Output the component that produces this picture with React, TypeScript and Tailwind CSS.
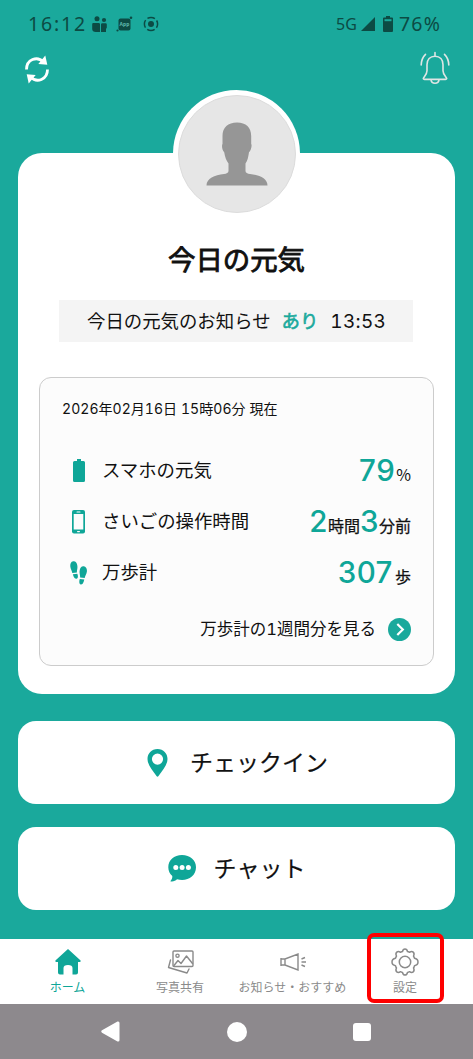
import type { ReactNode } from "react";

const Digits = ({ children }: { children: ReactNode }) => (
  <span className="text-[29.500px] font-medium tracking-[0.5px] text-[#0fa698] [-webkit-text-stroke:0px]">
    {children}
  </span>
);

function StatusBar() {
  return (
    <div className="flex h-12 items-center justify-between pl-[28px] pr-[33px] font-['Noto_Sans'] text-[#0c4b44]">
      <div className="flex items-center">
        <span className="w-[64px] text-[19.500px] leading-none tracking-[1.800px]">
          16:12
        </span>
        <svg className="h-[17px] w-[15px]" viewBox="0 0 15 17" fill="currentColor">
          <circle cx="5" cy="2.8" r="2.5" />
          <circle cx="12" cy="4" r="2.1" />
          <path d="M1.3 7h5.4q1.3 0 1.3 1.3V16H4q-3.8 0-3.8-3V8.200Q.2 7 1.300 7z" />
          <path d="M10.300 7.200h3.300q1.200 0 1.200 1.200v3q0 1-.8 1.400V16H9V8.400q0-1.200 1.300-1.200z" />
        </svg>
        <svg className="ml-[9px] h-[17px] w-[17px]" viewBox="0 0 17 17">
          <rect x="2.500" y="2.500" width="12" height="12" rx="2" fill="currentColor" />
          <circle cx="15" cy="1.800" r="1.300" fill="currentColor" />
          <circle cx="1.500" cy="14.500" r="1.100" fill="currentColor" />
          <text x="8.500" y="10.300" fontSize="5" fontWeight="bold" textAnchor="middle" fill="#5fb9ae">
            App
          </text>
        </svg>
        <svg className="ml-[10px] h-[16px] w-[16px]" viewBox="0 0 16 16" fill="none" stroke="currentColor">
          <circle cx="8" cy="8" r="3" fill="currentColor" stroke="none" />
          <circle cx="8" cy="8" r="6.600" strokeWidth="1.500" strokeDasharray="7.870 2.500" strokeDashoffset="3.935" />
        </svg>
      </div>
      <div className="flex items-center">
        <span className="w-[25px] text-[16px] leading-none">5G</span>
        <svg className="h-[14px] w-[14px]" viewBox="0 0 14 14" fill="currentColor">
          <path d="M14 0v14H0z" />
        </svg>
        <svg className="ml-[8px] h-[16px] w-[10px]" viewBox="0 0 10 16" fill="currentColor">
          <path d="M3 0h4v1.500h2q1 0 1 1V15q0 1-1 1H1q-1 0-1-1V2.500q0-1 1-1h2z" />
          <path d="M1.500 3.200h7v2h-7z" fill="#1aa99c" />
        </svg>
        <span className="ml-[6px] w-[41px] whitespace-nowrap text-[19.500px] leading-none tracking-[1.200px]">
          76%
        </span>
      </div>
    </div>
  );
}

function Header() {
  return (
    <div className="flex h-[42px] items-start justify-between pl-[25px] pr-[23px]">
      <svg className="mt-[7px] h-[29px] w-[24px]" viewBox="0 0 24 29">
        <g fill="none" stroke="#fff" strokeWidth="2.800">
          <path d="M1.500 14.500C1.500 4.500 12 .5 18.500 7" />
          <path d="M22.500 14.500c0 10-10.500 14-17 7.500" />
        </g>
        <path d="M20.300.5 22.300 9.700 13.300 9z" fill="#fff" />
        <path d="M3.700 28.500 1.700 19.300 10.700 20z" fill="#fff" />
      </svg>
      <svg
        className="mt-[3px] h-[34px] w-[30px]"
        viewBox="0 0 30 34"
        fill="none"
        stroke="#dfe5e4"
        strokeWidth="1.600"
        strokeLinecap="round"
        strokeLinejoin="round"
      >
        <path d="M15 1.500v3.700M15 5.200c-5 0-8 3.500-8 8.500v6c0 3-1.500 4.500-3.200 6.700-.9 1.200-.6 2 .7 2h21c1.300 0 1.600-.8.700-2C24.500 24.200 23 22.700 23 19.700v-6c0-5-3-8.500-8-8.500z" />
        <path d="M11 28.700c.5 4.800 7.500 4.800 8 0M5.500 3.300C2.700 6 1.300 9.500 1.200 14M24.500 3.300c2.800 2.700 4.200 6.200 4.300 10.700" />
      </svg>
    </div>
  );
}

function Avatar() {
  return (
    <div className="mx-auto flex h-[127px] w-[127px] items-center justify-center rounded-full bg-white">
      <div className="flex h-[118px] w-[118px] items-center justify-center rounded-full border border-[#dcdcdc] bg-[#e6e6e6]">
        <svg className="h-[64px] w-[62px]" viewBox="0 0 62 64" fill="#969696">
          <path d="M31 .5c-9 0-14.500 5-14.500 13.500v8c-1 .7-.4 6.500 1.700 8.200.7 4.500 2.300 8.800 4.300 11.300V49c0 2-2 2.600-4.500 3-9.500 1-17.500 4.500-17.500 11.500h61C61.500 56.500 53.500 53 44 52c-2.500-.4-4.500-1-4.500-3v-7.500c2-2.500 2.800-6.800 3.500-11.300 2.100-1.700 3.200-7.500 2.200-8.200v-8C45.200 5.500 40 .5 31 .5z" />
        </svg>
      </div>
    </div>
  );
}

const BatteryIcon = () => (
  <svg className="h-[23px] w-[12px]" viewBox="0 0 12 23" fill="#0fa698">
    <path d="M4 0h4v2h2.500Q12 2 12 3.500v18q0 1.500-1.500 1.500h-9Q0 23 0 21.500v-18Q0 2 1.500 2H4z" />
  </svg>
);

const PhoneIcon = () => (
  <svg className="h-[24px] w-[13px]" viewBox="0 0 13 24">
    <rect width="13" height="23.500" rx="2" fill="#0fa698" />
    <rect x="1.700" y="4" width="9.600" height="15.500" fill="#fcfcfc" />
    <rect x="4.500" y="1.500" width="4" height="1" rx=".5" fill="#fcfcfc" />
    <rect x="5" y="21" width="3" height="1.200" rx=".6" fill="#fcfcfc" />
  </svg>
);

const StepsIcon = () => (
  <svg className="h-[24px] w-[17px]" viewBox="0 0 17 24" fill="#0fa698">
    <path d="M3.200.3C1 .6 0 3 .3 5.500c.3 2.700 1.500 4 2 6.500l4.600-.6c-.2-2.400.8-3.400.5-6.400C7.100 2 5.500 0 3.200.3z" />
    <path d="m2.900 13.300 4.400-.6c.8 1.700 1 4.600-.8 5-2.200.4-3-2-3.600-4.400z" />
    <path d="M13.800 5.300c2.200.3 3.400 2.700 3.100 5.200-.3 2.700-1.700 4-2.200 6.500l-4.600-.6c.2-2.400-.8-3.400-.5-6.400.3-3 1.900-5 4.200-4.700z" />
    <path d="m9.800 18 4.500.6c-.6 2.400-1.400 5.200-3.500 4.900-1.900-.3-1.700-3.600-1-5.500z" />
  </svg>
);

const stats = [
  {
    icon: <BatteryIcon />,
    label: "スマホの元気",
    value: (
      <>
        <Digits>79</Digits>
        <span className="ml-px font-['Noto_Sans_CJK_JP'] [-webkit-text-stroke:0px]">
          %
        </span>
      </>
    ),
  },
  {
    icon: <PhoneIcon />,
    label: "さいごの操作時間",
    value: (
      <>
        <Digits>2</Digits>時間<Digits>3</Digits>分前
      </>
    ),
  },
  {
    icon: <StepsIcon />,
    label: "万歩計",
    value: (
      <>
        <Digits>307</Digits>
        <span className="ml-[2px]">歩</span>
      </>
    ),
  },
];

function StatsPanel() {
  return (
    <div className="ml-[21px] mt-[35px] h-[289px] w-[395px] rounded-xl border-[1.500px] border-[#cccccc] bg-[#fcfcfc] pl-[22px] pr-[22px] pt-[20px]">
      <p className="h-[22px] whitespace-nowrap text-[14px] leading-[22px] tracking-[0.050px] tabular-nums">
        2026年02月16日 15時06分 現在
      </p>
      <div className="mt-[25px]">
        {stats.map((stat) => (
          <div key={stat.label} className="flex h-[51px] items-center">
            <div className="flex w-[33px] justify-center">{stat.icon}</div>
            <span className="ml-[7px] whitespace-nowrap text-[18.400px] leading-none">
              {stat.label}
            </span>
            <span className="ml-auto whitespace-nowrap text-[16px] leading-none [-webkit-text-stroke:0.25px]">
              {stat.value}
            </span>
          </div>
        ))}
      </div>
      <div className="mt-[7px] flex h-[48px] items-center justify-end">
        <span className="text-[16.500px] leading-none tabular-nums">
          万歩計の1週間分を見る
        </span>
        <svg className="ml-[12px] h-[23px] w-[23px]" viewBox="0 0 23 23">
          <circle cx="11.500" cy="11.500" r="11.500" fill="#1aa99c" />
          <path d="m9.300 6 5.500 5.500L9.300 17" fill="none" stroke="#fff" strokeWidth="2.200" />
        </svg>
      </div>
    </div>
  );
}

function ActionButton({ icon, label }: { icon: ReactNode; label: string }) {
  return (
    <button className="flex h-[83px] w-full items-center justify-center rounded-[18px] bg-white text-[23px] [-webkit-text-stroke:0.2px]">
      {icon}
      <span className="pt-[2px] leading-none">{label}</span>
    </button>
  );
}

function TabBar() {
  return (
    <nav className="flex h-[65px] w-full bg-white pl-[11px] pr-[12px] text-[12px] text-[#8a8a8a]">
      <div className="flex w-[113px] flex-col items-center text-[#0fa698]">
        <svg className="mt-[10px] h-[26px] w-[26px]" viewBox="0 0 26 26" fill="currentColor">
          <path d="M13 0 25.600 11.500q.4 1.500-1 1.500H23v10.500q0 2-2 2h-3.500V19q0-3-4.500-3t-4.500 3v6.500H5q-2 0-2-2V13H1.400q-1.400 0-1-1.500z" />
        </svg>
        <span className="mt-[6px] leading-[14px]">ホーム</span>
      </div>
      <div className="flex w-[112px] flex-col items-center">
        <svg
          className="mt-[11px] h-[25px] w-[27px]"
          viewBox="0 0 27 25"
          fill="none"
          stroke="currentColor"
          strokeWidth="1.400"
          strokeLinejoin="round"
          strokeLinecap="round"
        >
          <rect x="6" y="1" width="20" height="15.500" rx="1" />
          <circle cx="10.500" cy="5.700" r="1.600" />
          <path d="m7 15.500 4-5 3 3L19.500 6l6 7.500M3.500 10 1.500 17.500 20 23l2-4" />
        </svg>
        <span className="mt-[6px] leading-[14px]">写真共有</span>
      </div>
      <div className="flex w-[113px] flex-col items-center">
        <svg
          className="mt-[14px] h-[18px] w-[26px]"
          viewBox="0 0 26 18"
          fill="none"
          stroke="currentColor"
          strokeWidth="1.400"
        >
          <path d="M1 5v8M1 6h4l13-5v16L5 12H1M5 6v6M21.500 6 25 4.500M21.500 9H26M21.500 12l3.500 1.500" />
        </svg>
        <span className="mt-[10px] whitespace-nowrap leading-[14px]">
          お知らせ・おすすめ
        </span>
      </div>
      <div className="relative flex w-[112px] flex-col items-center">
        <svg
          className="mt-[9px] h-[28px] w-[28px]"
          viewBox="0 0 28 28"
          fill="none"
          stroke="currentColor"
          strokeWidth="1.500"
          strokeLinejoin="round"
        >
          <circle cx="14" cy="14" r="5.700" />
          <path d="M11.500 3.500Q12 1 14 1t2.500 2.500q1 .2 2 .8 2.200-1.500 3.700-.2 1.600 1.600.3 3.900.6.900 1 2.300 3.500.7 3.500 3.700t-3.500 3.700q-.4 1.400-1 2.300 1.300 2.300-.3 3.900-1.500 1.300-3.700-.2-1 .6-2 .8Q16 27 14 27t-2.500-2.500q-1-.2-2-.8-2.200 1.500-3.700.2-1.600-1.600-.3-3.900-.6-.9-1-2.300Q1 17 1 14t3.500-3.700q.4-1.400 1-2.300-1.300-2.300.3-3.900 1.500-1.300 3.700.2 1-.6 2-.8z" />
        </svg>
        <span className="mt-[5px] leading-[14px]">設定</span>
        {/* Highlight frame around the settings tab */}
        <div className="absolute left-[18px] top-[-6px] h-[70px] w-[77px] rounded-[7px] border-4 border-[#fe0000]" />
      </div>
    </nav>
  );
}

function SystemNav() {
  return (
    <div className="flex h-[55px] items-center bg-[#8d898d] pl-[101px]">
      <svg className="h-[21px] w-[19px]" viewBox="0 0 19 21" fill="#fff">
        <path d="M1 9.300 16.500.500Q18.500 0 18.500 2v17q0 2-2 1.500L1 11.700q-1.500-1.200 0-2.400z" />
      </svg>
      <div className="ml-[107px] h-[20px] w-[20px] rounded-full bg-white" />
      <div className="ml-[106px] h-[18px] w-[18px] rounded-[3px] bg-white" />
    </div>
  );
}

export default function App() {
  return (
    <main className="h-[1059px] w-[473px] overflow-hidden bg-[#1aa99c] font-['Inter','Noto_Sans_CJK_JP',sans-serif] text-[#111111]">
      <StatusBar />
      <Header />
      <div className="px-[18px]">
        <section className="mt-[63px] flex h-[541px] w-[437px] flex-col rounded-[24px] bg-white">
          <div className="-mt-[63px] h-[127px]">
            <Avatar />
          </div>
          <h1 className="mt-[22px] h-[42px] text-center text-[27.400px] leading-[42px] [-webkit-text-stroke:0.9px]">
            今日の元気
          </h1>
          <div className="ml-[41px] mt-[19px] flex h-[42px] w-[354px] items-center whitespace-nowrap bg-[#f4f4f4] pl-[28px] text-[18.400px] leading-none">
            <span>今日の元気のお知らせ</span>
            <span className="ml-[11px] text-[#1aa99c] [-webkit-text-stroke:0.6px]">
              あり
            </span>
            <span className="ml-[12px] text-[19px] tracking-[0.3px] tabular-nums">
              13:53
            </span>
          </div>
          <StatsPanel />
        </section>

        <div className="mt-[27px] flex flex-col gap-[23px]">
          <ActionButton
            label="チェックイン"
            icon={
              <svg className="ml-[2px] mr-[22px] h-[28px] w-[21px]" viewBox="0 0 20 28">
                <path
                  d="M10 0C4 0 0 4.500 0 10c0 6 5 11 9 17q1 1.500 2 0c4-6 9-11 9-17C20 4.500 16 0 10 0zm0 4.500a5.600 5.600 0 1 1 0 11.200 5.600 5.600 0 0 1 0-11.200z"
                  fill="#0fa698"
                />
              </svg>
            }
          />
          <ActionButton
            label="チャット"
            icon={
              <svg className="mr-[18px] h-[27px] w-[28px]" viewBox="0 0 28 27">
                <path
                  d="M14 0C6 0 .3 5 .3 12.300c0 3.700 1.500 6.500 4 8.700.2 2.200-.5 3.500-2 5.200 3 .6 5-.4 6.700-2 9.500 2.800 19-2.500 19-12C28 5 22 0 14 0z"
                  fill="#0fa698"
                />
                <g fill="#fff">
                  <circle cx="7.800" cy="12.500" r="2.500" />
                  <circle cx="14.100" cy="12.500" r="2.500" />
                  <circle cx="20.400" cy="12.500" r="2.500" />
                </g>
              </svg>
            }
          />
        </div>
      </div>
      <div className="mt-[29px]">
        <TabBar />
        <SystemNav />
      </div>
    </main>
  );
}
